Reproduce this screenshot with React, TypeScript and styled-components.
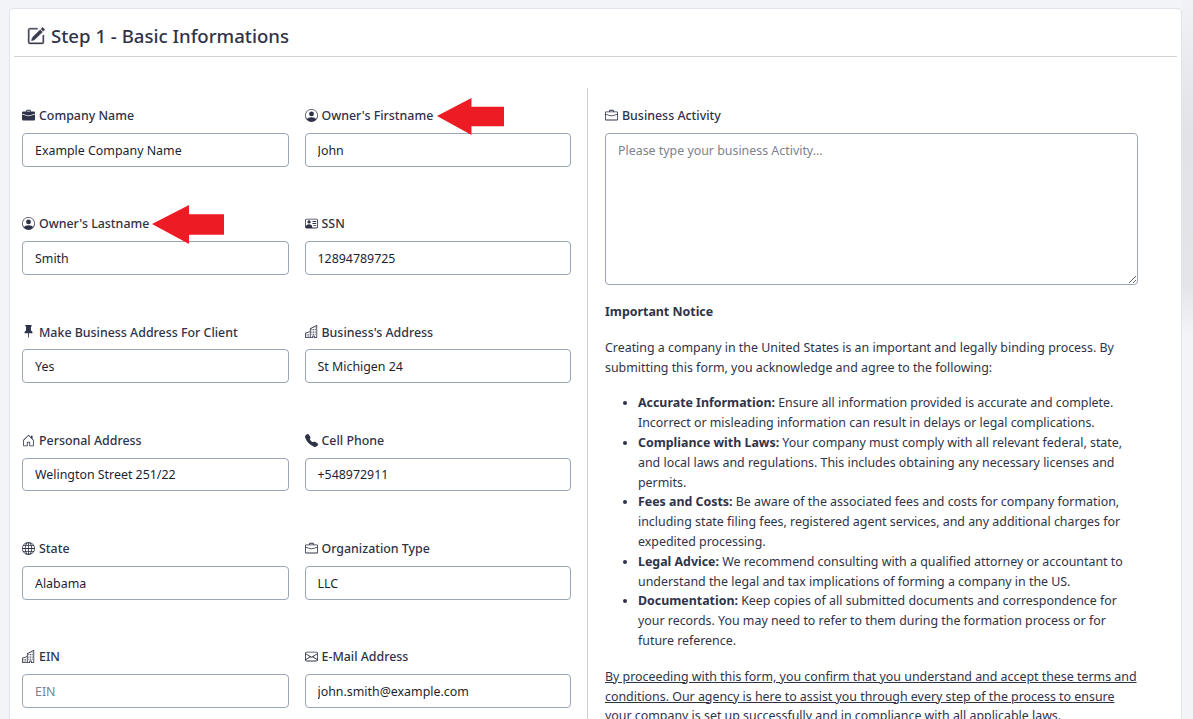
import React from 'react';
import styled, { createGlobalStyle } from 'styled-components';
import {
  BsBriefcase,
  BsBriefcaseFill,
  BsBuildings,
  BsEnvelope,
  BsGlobe,
  BsHouseDoor,
  BsPencilSquare,
  BsPersonCircle,
  BsPersonVcard,
  BsPinFill,
  BsTelephoneFill,
} from 'react-icons/bs';

const GlobalStyle = createGlobalStyle`
  html, body {
    margin: 0;
    height: 100%;
    overflow: hidden;
    background: #f3f4f8;
  }
  body {
    font-family: "Noto Sans", "Open Sans", sans-serif;
    font-size: 12.4px;
    line-height: 19.8px;
    color: #2f3349;
  }
`;

const Page = styled.div`
  padding: 8px 11px 0 9px;
  height: 100vh;
  box-sizing: border-box;
`;

const ScrollShade = styled.div`
  position: fixed;
  top: 0;
  right: 0;
  width: 11px;
  height: 335px;
  background: linear-gradient(180deg, #f2f3f7 0, #e9ebf0 60px, #e1e3e9 130px, #e3e5e9 285px, #f3f4f8 335px);
`;

const Card = styled.section`
  background: #fff;
  border: 1px solid #dfe3ea;
  border-radius: 4px;
  padding: 0 4px;
  min-height: 900px;
`;

const CardHeader = styled.header`
  height: 48px;
  box-sizing: border-box;
  padding: 6px 0 0 13px;
  display: flex;
  align-items: center;
  gap: 6px;
  border-bottom: 1px solid #cfd2d6;
`;

const Title = styled.h1`
  margin: 0;
  font-size: 18.6px;
  line-height: 24px;
  font-weight: 500;
  color: #2f3349;
`;

const TitleIcon = styled(BsPencilSquare)`
  width: 18px;
  height: 18px;
  color: #3a3d4f;
  stroke: #3a3d4f;
  stroke-width: 0.4px;
`;

const CardBody = styled.div`
  display: grid;
  grid-template-columns: 574px 1fr;
  margin-top: 31px;
`;

const LeftColumn = styled.div`
  border-right: 1px solid #cfd2d6;
  padding: 18.2px 16px 0 8px;
  display: grid;
  grid-template-columns: 1fr 1fr;
  column-gap: 16px;
  row-gap: 47.6px;
  align-content: start;
`;

const RightColumn = styled.div`
  padding: 18.2px 0 0 17px;
  width: 533px;
`;

const Field = styled.div`
  position: relative;
`;

const Label = styled.label`
  display: flex;
  align-items: center;
  gap: 4px;
  margin-bottom: 7px;
  font-weight: 500;
  white-space: nowrap;
  svg {
    width: 13px;
    height: 13px;
    margin-top: -1px;
    flex: none;
    color: #2f3349;
  }
`;

const Input = styled.input`
  display: block;
  box-sizing: border-box;
  width: 100%;
  height: 33.8px;
  padding: 1px 12px 0;
  border: 1px solid #9aa5b5;
  border-radius: 4px;
  font: inherit;
  color: #1c1f33;
  background: #fff;
  outline: none;
  &::placeholder {
    color: #7b8290;
    opacity: 1;
  }
`;

const TextArea = styled.textarea`
  display: block;
  box-sizing: border-box;
  width: 100%;
  height: 152px;
  padding: 7px 12px;
  border: 1px solid #9aa5b5;
  border-radius: 4px;
  font: inherit;
  color: #1c1f33;
  background: #fff;
  outline: none;
  &::placeholder {
    color: #7b8290;
    opacity: 1;
  }
`;

const Arrow = styled.svg<{ $left: number; $top: number; $width: number; $height: number }>`
  position: absolute;
  left: ${(p) => p.$left}px;
  top: ${(p) => p.$top}px;
  width: ${(p) => p.$width}px;
  height: ${(p) => p.$height}px;
  fill: #ed1c24;
`;

const NoticeTitle = styled.p`
  margin: 17px 0 16px;
  font-weight: 700;
`;

const Paragraph = styled.p`
  margin: 0 0 16px;
`;

const NoticeList = styled.ul`
  margin: 0 0 16px;
  padding-left: 33px;
  strong {
    font-weight: 700;
  }
`;

const Terms = styled.p`
  margin: 0;
  text-decoration: underline;
`;

interface ArrowSpec {
  left: number;
  top: number;
  width: number;
  height: number;
}

interface FieldItem {
  label: string;
  icon: React.ReactNode;
  value?: string;
  placeholder?: string;
  arrow?: ArrowSpec;
}

const fields: FieldItem[] = [
  { label: 'Company Name', icon: <BsBriefcaseFill />, value: 'Example Company Name' },
  {
    label: "Owner's Firstname",
    icon: <BsPersonCircle />,
    value: 'John',
    arrow: { left: 132, top: -8, width: 67, height: 37 },
  },
  {
    label: "Owner's Lastname",
    icon: <BsPersonCircle />,
    value: 'Smith',
    arrow: { left: 130, top: -9, width: 72, height: 39 },
  },
  { label: 'SSN', icon: <BsPersonVcard />, value: '12894789725' },
  { label: 'Make Business Address For Client', icon: <BsPinFill />, value: 'Yes' },
  { label: "Business's Address", icon: <BsBuildings />, value: 'St Michigen 24' },
  { label: 'Personal Address', icon: <BsHouseDoor />, value: 'Welington Street 251/22' },
  { label: 'Cell Phone', icon: <BsTelephoneFill />, value: '+548972911' },
  { label: 'State', icon: <BsGlobe />, value: 'Alabama' },
  { label: 'Organization Type', icon: <BsBriefcase />, value: 'LLC' },
  { label: 'EIN', icon: <BsBuildings />, placeholder: 'EIN' },
  { label: 'E-Mail Address', icon: <BsEnvelope />, value: 'john.smith@example.com' },
];

const App: React.FC = () => {
  return (
    <Page>
      <GlobalStyle />
      <ScrollShade />
      <Card>
        <CardHeader>
          <TitleIcon />
          <Title>Step 1 - Basic Informations</Title>
        </CardHeader>
        <CardBody>
          <LeftColumn>
            {fields.map((field) => (
              <Field key={field.label}>
                <Label>
                  {field.icon}
                  {field.label}
                </Label>
                <Input readOnly defaultValue={field.value} placeholder={field.placeholder} />
                {field.arrow && (
                  <Arrow
                    viewBox="0 0 68 38"
                    preserveAspectRatio="none"
                    $left={field.arrow.left}
                    $top={field.arrow.top}
                    $width={field.arrow.width}
                    $height={field.arrow.height}
                  >
                    <polygon points="0,18.5 35,0 35,9 68,9 68,29 35,29 35,38" />
                  </Arrow>
                )}
              </Field>
            ))}
          </LeftColumn>
          <RightColumn>
            <Field>
              <Label>
                <BsBriefcase />
                Business Activity
              </Label>
              <TextArea placeholder="Please type your business Activity..." />
            </Field>
            <NoticeTitle>Important Notice</NoticeTitle>
            <Paragraph>
              Creating a company in the United States is an important and legally binding process. By
              submitting this form, you acknowledge and agree to the following:
            </Paragraph>
            <NoticeList>
              <li>
                <strong>Accurate Information:</strong> Ensure all information provided is accurate and complete.
                Incorrect or misleading information can result in delays or legal complications.
              </li>
              <li>
                <strong>Compliance with Laws:</strong> Your company must comply with all relevant federal, state,
                and local laws and regulations. This includes obtaining any necessary licenses and permits.
              </li>
              <li>
                <strong>Fees and Costs:</strong> Be aware of the associated fees and costs for company formation,
                including state filing fees, registered agent services, and any additional charges for expedited
                processing.
              </li>
              <li>
                <strong>Legal Advice:</strong> We recommend consulting with a qualified attorney or accountant to
                understand the legal and tax implications of forming a company in the US.
              </li>
              <li>
                <strong>Documentation:</strong> Keep copies of all submitted documents and correspondence for your
                records. You may need to refer to them during the formation process or for future reference.
              </li>
            </NoticeList>
            <Terms>
              By proceeding with this form, you confirm that you understand and accept these terms and conditions.
              Our agency is here to assist you through every step of the process to ensure your company is set up
              successfully and in compliance with all applicable laws.
            </Terms>
          </RightColumn>
        </CardBody>
      </Card>
    </Page>
  );
};

export default App;
